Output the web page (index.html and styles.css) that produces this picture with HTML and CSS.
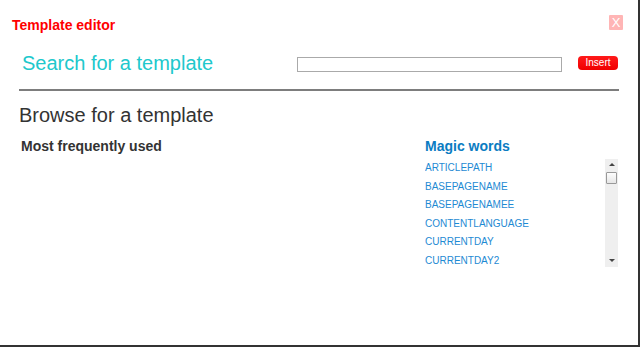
FILE: index.html
```html
<!DOCTYPE html>
<html>
<head>
<meta charset="utf-8">
<link rel="stylesheet" href="styles.css">
</head>
<body>
<div class="dialog">
  <div class="header">
    <div class="title">Template editor</div>
    <div class="close">X</div>
  </div>
  <div class="content">
    <div class="search-row">
      <div class="search-heading">Search for a template</div>
      <input class="search-input" type="text">
      <div class="insert-btn">Insert</div>
    </div>
    <div class="rule"></div>
    <div class="browse-heading">Browse for a template</div>
    <div class="columns">
      <div class="left-col">
        <div class="col-title">Most frequently used</div>
      </div>
      <div class="right-col">
        <div class="magic-title">Magic words</div>
        <div class="listbox">
          <ul class="words">
            <li>ARTICLEPATH</li>
            <li>BASEPAGENAME</li>
            <li>BASEPAGENAMEE</li>
            <li>CONTENTLANGUAGE</li>
            <li>CURRENTDAY</li>
            <li>CURRENTDAY2</li>
          </ul>
          <div class="scrollbar">
            <div class="arrow up"></div>
            <div class="thumb"></div>
            <div class="track-fill"></div>
            <div class="arrow down"></div>
          </div>
        </div>
      </div>
    </div>
  </div>
</div>
</body>
</html>
```

FILE: styles.css
```css
* { box-sizing: border-box; }
html, body { margin: 0; padding: 0; background: #fff; }
body { font-family: "Liberation Sans", Arial, sans-serif; }

.dialog {
  width: 640px;
  height: 347px;
  background: #fff;
  border-right: 2px solid #333;
  border-bottom: 2px solid #333;
  overflow: hidden;
}

.header {
  display: flex;
  justify-content: space-between;
  align-items: flex-start;
  padding: 17px 15px 0 12px;
}
.title {
  color: #ff0000;
  font-size: 14px;
  font-weight: bold;
  line-height: 16px;
}
.close {
  margin-top: -2px;
  width: 14px;
  height: 15px;
  background: #ffb5b5;
  color: #fff;
  font-size: 13px;
  line-height: 15px;
  text-align: center;
  border-radius: 1px;
}

.content {
  padding: 18px 0 0 19px;
  width: 619px;
}

.search-row {
  display: flex;
  align-items: flex-start;
  padding-left: 3px;
}
.search-heading {
  flex: 0 0 275px;
  color: #20c8cc;
  font-size: 20px;
  line-height: 24px;
}
.search-input {
  margin: 6px 0 0 0;
  width: 265px;
  height: 15px;
  border: 1px solid #aaa;
  padding: 0;
  background: #fff;
}
.insert-btn {
  margin: 5px 0 0 16px;
  width: 40px;
  height: 14px;
  background: linear-gradient(#ff1a1a, #f00000);
  border-radius: 4px;
  color: #fff;
  font-size: 10px;
  line-height: 14px;
  text-align: center;
}

.rule {
  margin-top: 14px;
  height: 2px;
  width: 600px;
  background: #7d7d7d;
}

.browse-heading {
  margin-top: 12px;
  color: #333;
  font-size: 20px;
  line-height: 24px;
}

.columns {
  display: flex;
  margin-top: 11px;
}
.left-col {
  flex: 1;
  padding-left: 2px;
}
.col-title {
  color: #333;
  font-size: 14px;
  font-weight: bold;
  line-height: 16px;
}
.right-col {
  width: 193px;
  margin-right: 1px;
}
.magic-title {
  color: #0b7cc2;
  font-size: 14px;
  font-weight: bold;
  line-height: 16px;
}
.listbox {
  margin-top: 5px;
  height: 108px;
  display: flex;
}
.words {
  flex: 1;
  list-style: none;
  margin: 0;
  padding: 0;
  overflow: hidden;
  height: 108px;
}
.words li {
  color: #1e8ad3;
  font-size: 10px;
  line-height: 18.6px;
}
.scrollbar {
  width: 13px;
  height: 108px;
  background: #efefef;
  display: flex;
  flex-direction: column;
  align-items: center;
}
.arrow {
  width: 0;
  height: 0;
  border-left: 3px solid transparent;
  border-right: 3px solid transparent;
}
.arrow.up {
  margin-top: 4px;
  border-bottom: 3px solid #444;
}
.arrow.down {
  margin-bottom: 5px;
  border-top: 3px solid #444;
}
.thumb {
  margin-top: 6px;
  width: 11px;
  height: 12px;
  border: 1px solid #999;
  background: linear-gradient(#fdfdfd, #e6e6e6);
  border-radius: 1px;
}
.track-fill { flex: 1; }
```
